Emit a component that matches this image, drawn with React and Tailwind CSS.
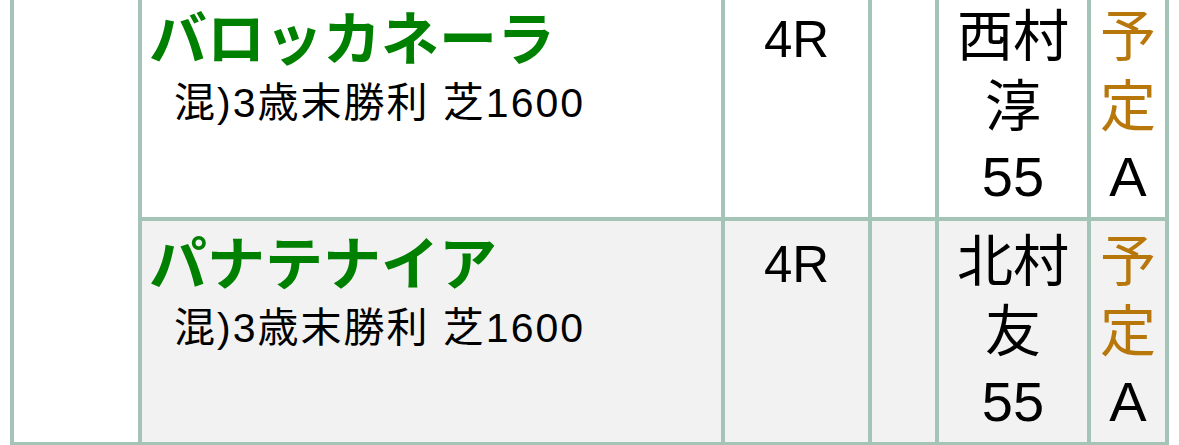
import React from 'react'

const races = [
    { name: 'バロッカネーラ', cond: '混)3歳末勝利 芝1600', race: '4R', jockey: ['西村', '淳'], weight: '55', bg: 'bg-white' },
    { name: 'パナテナイア', cond: '混)3歳末勝利 芝1600', race: '4R', jockey: ['北村', '友'], weight: '55', bg: 'bg-[#f2f2f2]' },
]

const cell = 'align-top border-r-4 border-b-4 border-[#a3c4b6] h-[225px]'

const App = () => {
    return (
        <div className="w-[1179px] h-[445px] overflow-hidden bg-white">
            <table
                className="-mt-[8px] ml-[10px] w-[1159px] table-fixed border-separate border-spacing-0 border-l-4 border-t-4 border-[#a3c4b6] text-black"
                style={{ fontFamily: '"Liberation Sans", "Noto Sans CJK JP", sans-serif' }}
            >
                <tbody>
                    {races.map((r, i) => (
                        <tr key={i}>
                            {i === 0 && (
                                <td rowSpan={2} className="w-[128px] align-top border-r-4 border-b-4 border-[#a3c4b6] bg-white"></td>
                            )}
                            <td className={`w-[583px] ${cell} ${r.bg} pl-[7px] pt-[6px]`}>
                                <div className="text-[58px] leading-[66px] font-bold text-[#008000]" style={{ fontFamily: '"Noto Sans CJK JP", sans-serif' }}>
                                    {r.name}
                                </div>
                                <div className="mt-[9px] pl-[25px] text-[41px] leading-[52px] tracking-[2px]">
                                    {r.cond}
                                </div>
                            </td>
                            <td className={`w-[147px] ${cell} ${r.bg} text-center pt-[14px] text-[51px] leading-[60px]`}>
                                {r.race}
                            </td>
                            <td className={`w-[67px] ${cell} ${r.bg}`}></td>
                            <td className={`w-[152px] ${cell} ${r.bg} text-center pt-[6px] text-[56px] leading-[70px]`}>
                                <div>{r.jockey[0]}</div>
                                <div>{r.jockey[1]}</div>
                                <div>{r.weight}</div>
                            </td>
                            <td className={`w-[78px] ${cell} ${r.bg} text-center pt-[6px] text-[56px] leading-[70px]`}>
                                <div className="text-[#b8770b]">予</div>
                                <div className="text-[#b8770b]">定</div>
                                <div>A</div>
                            </td>
                        </tr>
                    ))}
                </tbody>
            </table>
        </div>
    )
}

export default App
